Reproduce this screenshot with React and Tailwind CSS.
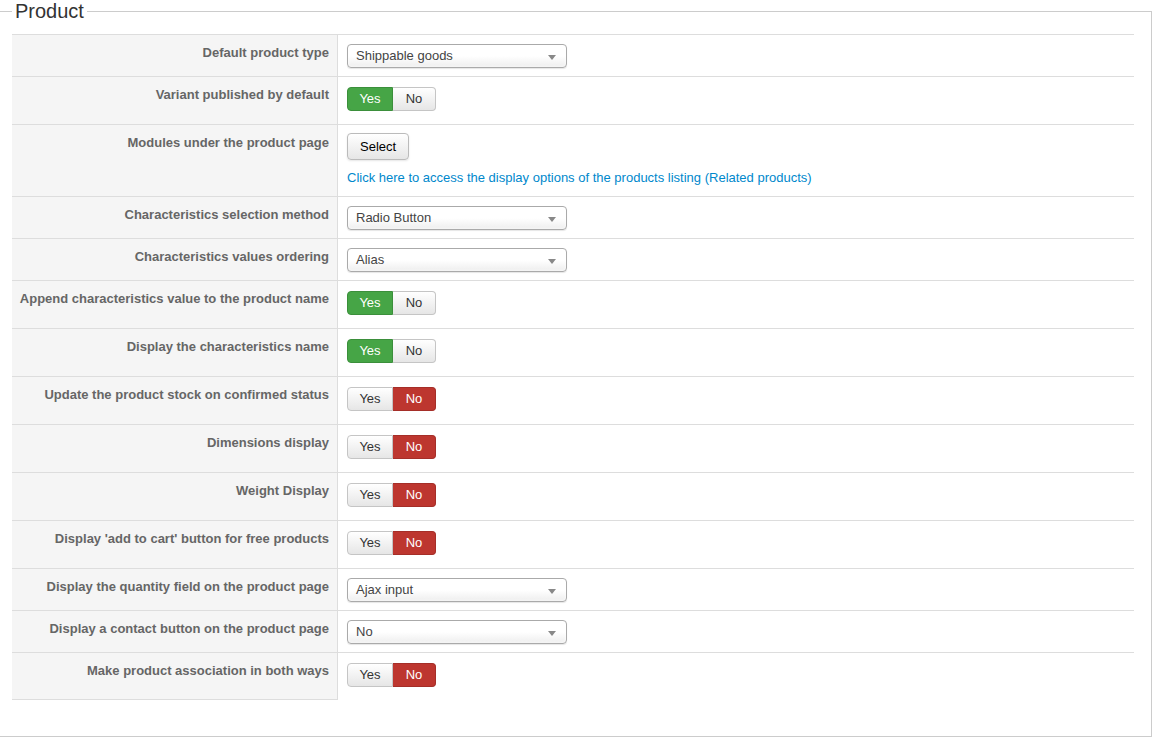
import React from 'react';

const rows = [
  { label: 'Default product type', type: 'select', value: 'Shippable goods' },
  { label: 'Variant published by default', type: 'toggle', value: true },
  { label: 'Modules under the product page', type: 'modules' },
  { label: 'Characteristics selection method', type: 'select', value: 'Radio Button' },
  { label: 'Characteristics values ordering', type: 'select', value: 'Alias' },
  { label: 'Append characteristics value to the product name', type: 'toggle', value: true },
  { label: 'Display the characteristics name', type: 'toggle', value: true },
  { label: 'Update the product stock on confirmed status', type: 'toggle', value: false },
  { label: 'Dimensions display', type: 'toggle', value: false },
  { label: 'Weight Display', type: 'toggle', value: false },
  { label: "Display 'add to cart' button for free products", type: 'toggle', value: false },
  { label: 'Display the quantity field on the product page', type: 'select', value: 'Ajax input' },
  { label: 'Display a contact button on the product page', type: 'select', value: 'No' },
  { label: 'Make product association in both ways', type: 'toggle', value: false },
];

const FakeSelect = ({ value }) => (
  <div className="relative flex items-center w-[220px] h-[24px] pl-[8px] border border-[#aaa] rounded-[4px] bg-gradient-to-b from-white from-50% to-[#eee] text-[13px] text-[#444] shadow-[inset_0_0_3px_#fff,0_1px_1px_rgba(0,0,0,0.1)]">
    {value}
    <span className="absolute right-[10px] top-[10px] w-0 h-0 border-l-[4px] border-r-[4px] border-t-[5px] border-l-transparent border-r-transparent border-t-[#888]" />
  </div>
);

const Toggle = ({ on }) => (
  <div className="flex h-[24px] text-[13px]">
    <span
      className={
        on
          ? 'flex items-center justify-center w-[46px] rounded-l-[4px] border border-[#3b8f3b] bg-[#46a546] text-white'
          : 'flex items-center justify-center w-[46px] rounded-l-[4px] border border-[#c5c5c5] bg-gradient-to-b from-white to-[#e6e6e6] text-[#333]'
      }
    >
      Yes
    </span>
    <span
      className={
        on
          ? 'flex items-center justify-center w-[43px] rounded-r-[4px] border border-l-0 border-[#c5c5c5] bg-gradient-to-b from-white to-[#e6e6e6] text-[#333]'
          : 'flex items-center justify-center w-[43px] rounded-r-[4px] border border-l-0 border-[#a52e28] bg-[#bd362f] text-white'
      }
    >
      No
    </span>
  </div>
);

const Control = ({ row }) => {
  if (row.type === 'select') {
    return (
      <div className="pt-[9px] pb-[8px]">
        <FakeSelect value={row.value} />
      </div>
    );
  }
  if (row.type === 'toggle') {
    return (
      <div className="pt-[10px] pb-[13px]">
        <Toggle on={row.value} />
      </div>
    );
  }
  return (
    <div className="pt-[8px] pb-[9px]">
      <button className="h-[27px] px-[12px] border border-[#bbb] rounded-[4px] bg-gradient-to-b from-white to-[#e6e6e6] text-[13px] text-black shadow-[0_1px_2px_rgba(0,0,0,0.1)]">
        Select
      </button>
      <a className="block mt-[9px] text-[13px] leading-[18px] text-[#0088cc]">
        Click here to access the display options of the products listing (Related products)
      </a>
    </div>
  );
};

export default function App() {
  return (
    <div className="bg-white w-[1159px] h-[739px] font-['Liberation_Sans',Arial,sans-serif]">
      <fieldset className="w-[1152px] h-[737px] border border-l-0 border-[#ccc] pl-[12px] pr-[17px]">
        <legend className="px-[3px] text-[20px] leading-[22px] text-[#333]">Product</legend>
        <div className="mt-[12px]">
          {rows.map((row, i) => (
            <div key={i} className="flex border-t border-[#ddd]">
              <div
                className={
                  'w-[326px] shrink-0 bg-[#f5f5f5] border-r border-[#ddd] pt-[9px] pr-[8px] text-right text-[13px] leading-[18px] font-bold text-[#666]' +
                  (i === rows.length - 1 ? ' border-b' : '')
                }
              >
                {row.label}
              </div>
              <div className="flex-1 pl-[9px]">
                <Control row={row} />
              </div>
            </div>
          ))}
        </div>
      </fieldset>
    </div>
  );
}
